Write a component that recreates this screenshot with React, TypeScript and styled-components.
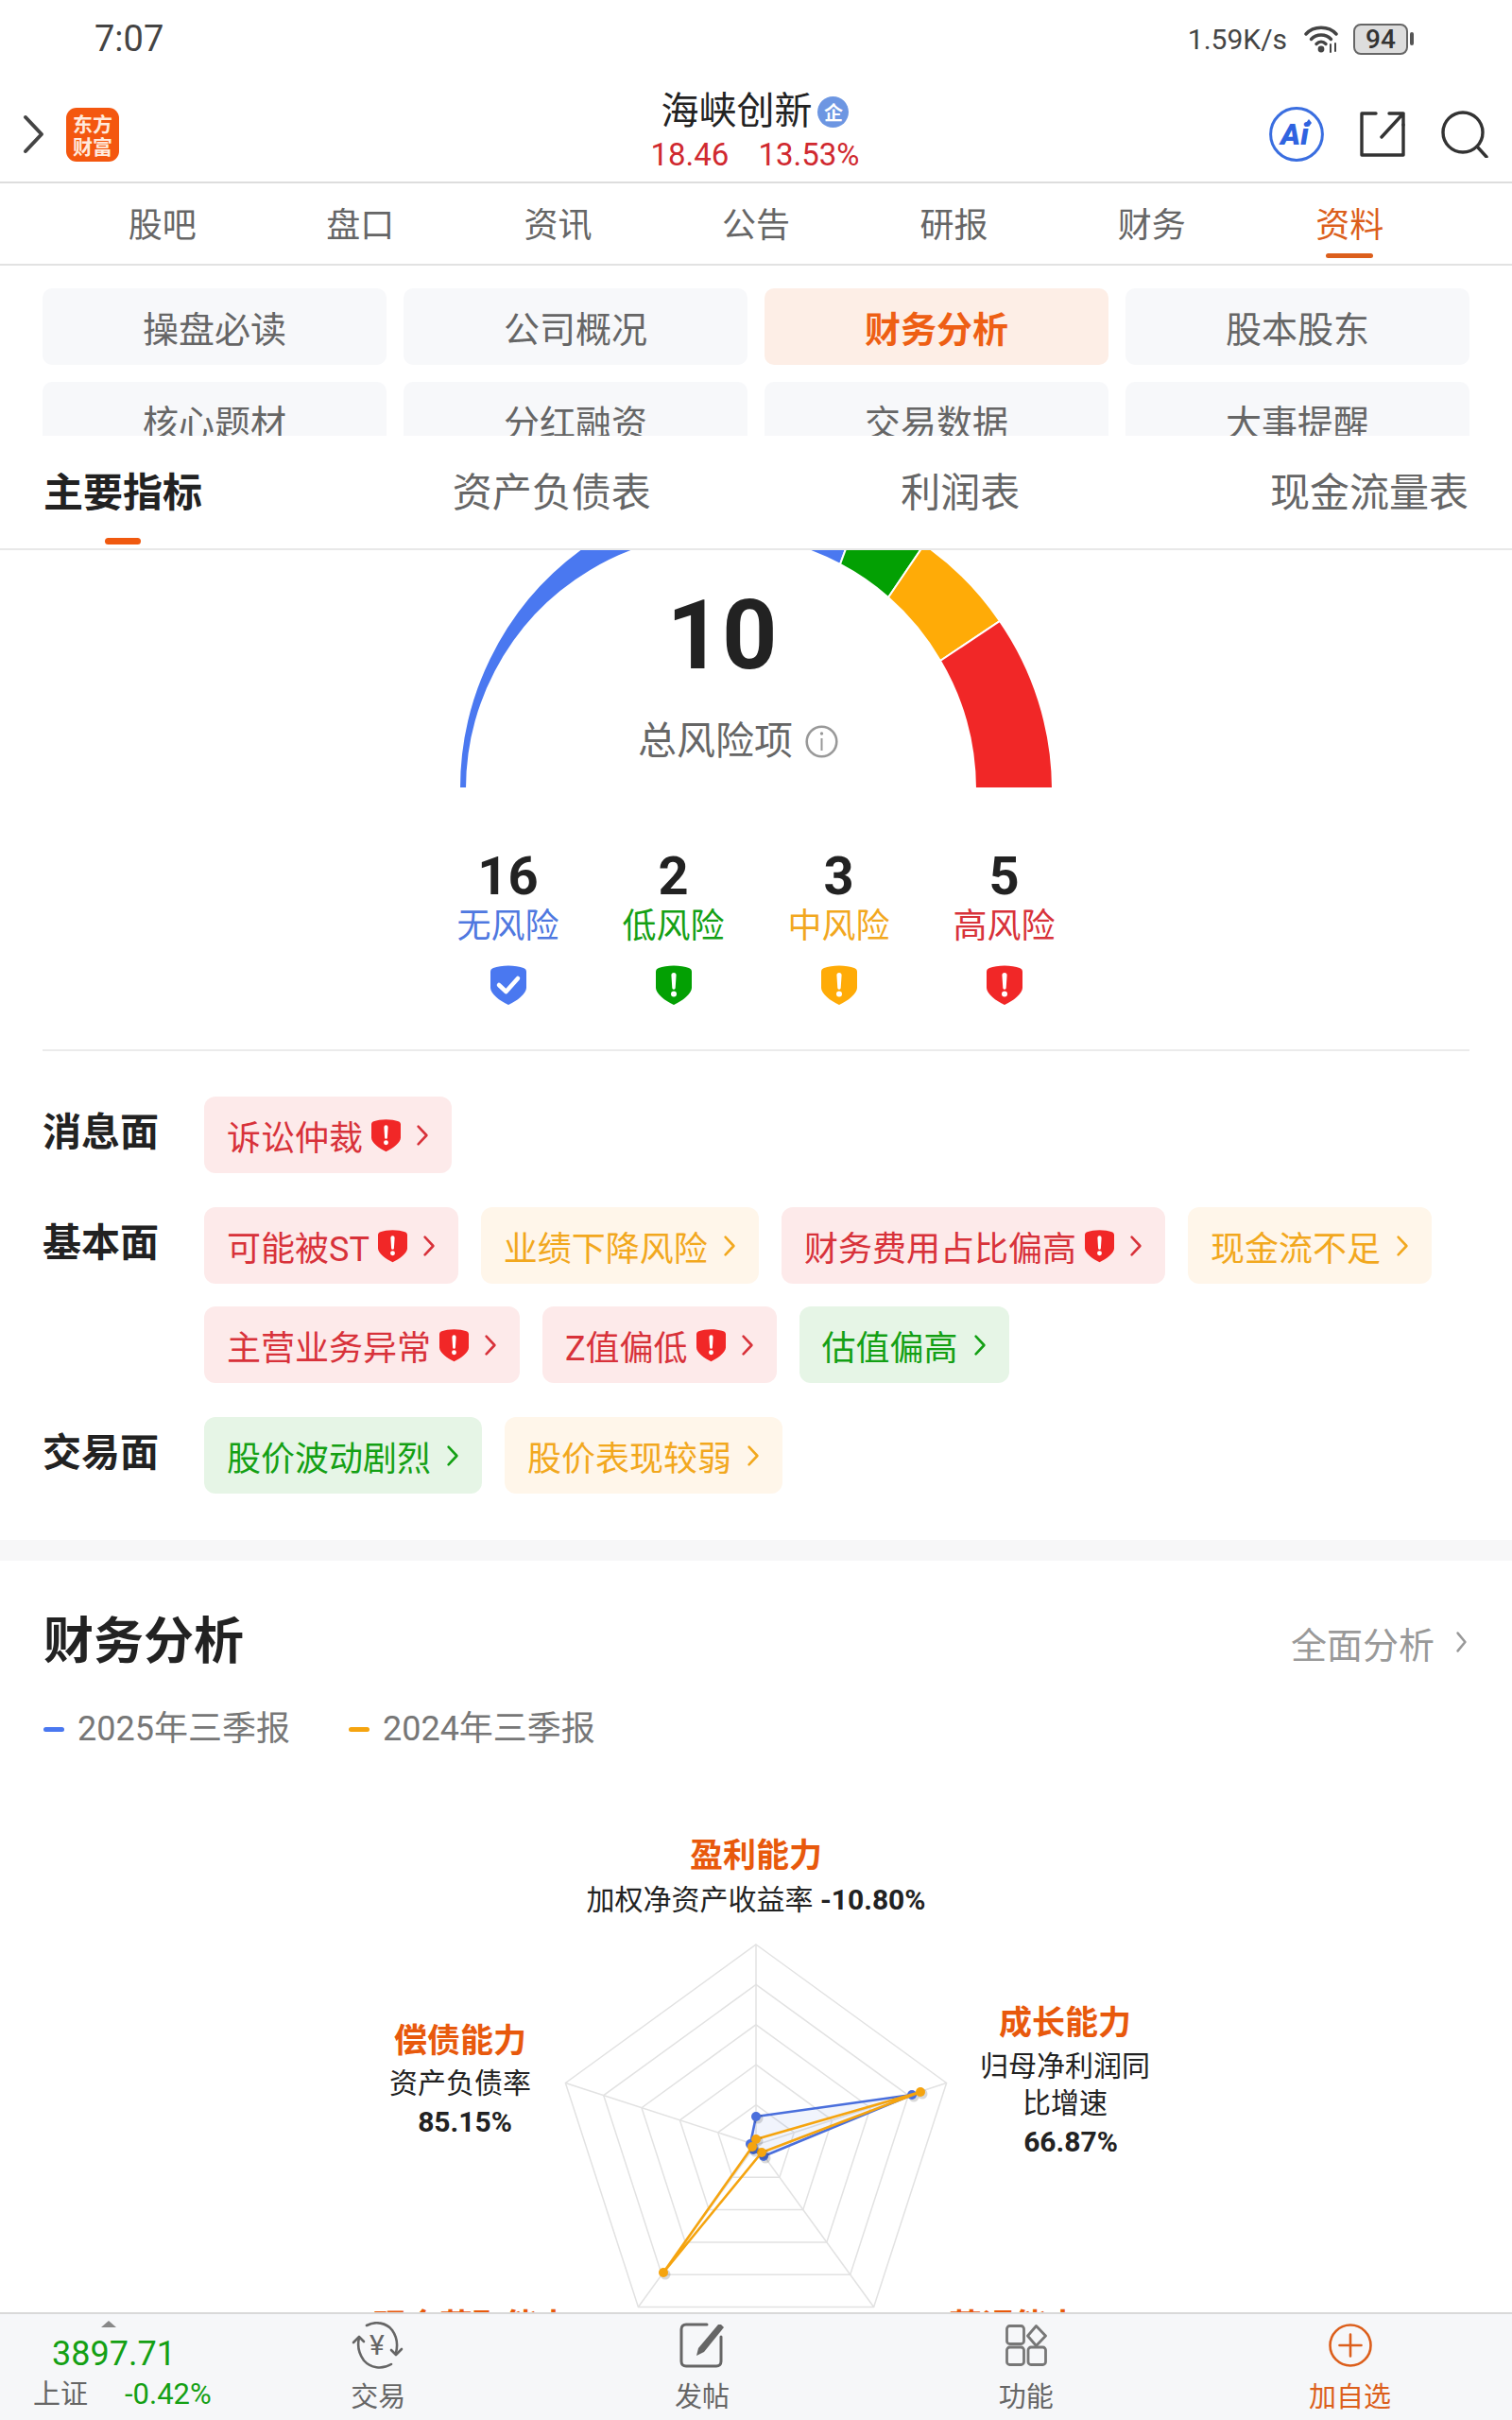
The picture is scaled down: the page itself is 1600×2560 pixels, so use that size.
import React from 'react';
import styled, { createGlobalStyle } from 'styled-components';

const GlobalStyle = createGlobalStyle`
  html, body {
    margin: 0;
    padding: 0;
    background: #ffffff;
  }
  * {
    box-sizing: border-box;
  }
  body {
    font-family: Roboto, "Noto Sans CJK SC", sans-serif;
    color: #222222;
  }
`;

const ORANGE = '#dc5f1c';

const tones = {
  red: { bg: '#fdeaea', fg: '#d8323a', solid: '#f12727' },
  orange: { bg: '#fff6ea', fg: '#f2a81e', solid: '#ffab07' },
  green: { bg: '#e6f5e6', fg: '#14a014', solid: '#03a003' },
  blue: { bg: '#eaf0fd', fg: '#4f78e0', solid: '#4a78f0' },
};

type Tone = keyof typeof tones;

const Screen = styled.div`
  width: 1600px;
  height: 2560px;
  display: flex;
  flex-direction: column;
  overflow: hidden;
  background: #ffffff;
`;

const StatusBar = styled.div`
  height: 82px;
  flex: none;
  display: flex;
  align-items: center;
  justify-content: space-between;
  padding: 0 104px 0 100px;
  color: #444444;
`;

const Clock = styled.span`
  font-size: 38px;
`;

const StatusRight = styled.div`
  display: flex;
  align-items: center;
`;

const Speed = styled.span`
  font-size: 30px;
  margin-right: 18px;
`;

const Battery = styled.span`
  width: 58px;
  height: 33px;
  margin-left: 14px;
  display: flex;
  align-items: center;
  justify-content: center;
  border: 2.5px solid #666666;
  border-radius: 8px;
  background: #dddddd;
  font-size: 28px;
  font-weight: 500;
  color: #333333;
`;

const BatteryNib = styled.span`
  width: 4px;
  height: 14px;
  margin-left: 2px;
  border-radius: 2px;
  background: #555555;
`;

const Header = styled.div`
  height: 112px;
  flex: none;
  display: grid;
  grid-template-columns: 1fr auto 1fr;
  align-items: center;
  padding: 0 25px 0 23px;
  border-bottom: 2px solid #dddddd;
`;

const HeaderLeft = styled.div`
  display: flex;
  align-items: center;
  gap: 22px;
  padding-top: 10px;
`;

const Logo = styled.div`
  width: 56px;
  height: 57px;
  display: flex;
  align-items: center;
  justify-content: center;
  text-align: center;
  border-radius: 11px;
  background: #f4570f;
  color: #ffeadd;
  font-size: 21px;
  line-height: 24px;
  font-weight: 700;
  font-family: "Noto Sans CJK SC", sans-serif;
`;

const TitleBlock = styled.div`
  display: flex;
  flex-direction: column;
  align-items: center;
`;

const TitleRow = styled.div`
  display: flex;
  align-items: center;
  gap: 6px;
  height: 54px;
  padding-top: 4px;
`;

const Title = styled.span`
  font-size: 40px;
  line-height: 50px;
  color: #222222;
`;

const VerifiedBadge = styled.span`
  width: 33px;
  height: 33px;
  display: flex;
  align-items: center;
  justify-content: center;
  border-radius: 50%;
  background: #6d96e2;
  color: #ffffff;
  font-size: 20px;
  font-weight: 700;
`;

const PriceRow = styled.div`
  display: flex;
  gap: 31px;
  font-size: 33px;
  line-height: 42px;
  color: #d0292f;
`;

const HeaderRight = styled.div`
  display: flex;
  align-items: center;
  justify-content: flex-end;
  gap: 38px;
  padding-top: 10px;
`;

const TopTabs = styled.div`
  height: 87px;
  flex: none;
  display: flex;
  padding: 0 67px;
  border-bottom: 2px solid #e2e2e2;
`;

const TopTab = styled.div<{ $active?: boolean }>`
  position: relative;
  flex: 1;
  display: flex;
  align-items: center;
  justify-content: center;
  padding-bottom: 3px;
  font-size: 36px;
  color: ${(p) => (p.$active ? ORANGE : '#666666')};

  ${(p) =>
    p.$active &&
    `&::after {
      content: '';
      position: absolute;
      left: 50%;
      bottom: 6px;
      width: 50px;
      height: 5px;
      margin-left: -25px;
      border-radius: 3px;
      background: ${ORANGE};
    }`}
`;

const SubNav = styled.div`
  height: 180px;
  flex: none;
  overflow: hidden;
  display: grid;
  grid-template-columns: repeat(4, 1fr);
  grid-auto-rows: 81px;
  gap: 18px;
  padding: 24px 45px 0;
`;

const SubNavButton = styled.div<{ $active?: boolean }>`
  display: flex;
  align-items: center;
  justify-content: center;
  border-radius: 10px;
  font-size: 38px;
  font-weight: ${(p) => (p.$active ? 700 : 400)};
  background: ${(p) => (p.$active ? '#fdeee6' : '#f7f8fa')};
  color: ${(p) => (p.$active ? '#ee5f14' : '#666666')};
`;

const MetricTabs = styled.div`
  height: 121px;
  flex: none;
  display: flex;
  justify-content: space-between;
  padding: 0 46px;
  border-bottom: 2px solid #e8e8e8;
`;

const MetricTab = styled.div<{ $active?: boolean }>`
  position: relative;
  display: flex;
  align-items: center;
  padding-bottom: 6px;
  font-size: 42px;
  font-weight: ${(p) => (p.$active ? 700 : 400)};
  color: ${(p) => (p.$active ? '#222222' : '#666666')};

  ${(p) =>
    p.$active &&
    `&::after {
      content: '';
      position: absolute;
      left: 50%;
      bottom: 4px;
      width: 38px;
      height: 7px;
      margin-left: -19px;
      border-radius: 4px;
      background: #f0590f;
    }`}
`;

const ScrollArea = styled.div`
  flex: 1;
  min-height: 0;
  overflow: hidden;
`;

const GaugePanel = styled.div`
  position: relative;
  height: 252px;
`;

const GaugeSvg = styled.svg`
  display: block;
`;

const GaugeCenter = styled.div`
  position: absolute;
  top: 0;
  left: 674px;
  width: 214px;
  display: flex;
  flex-direction: column;
  align-items: center;
`;

const GaugeValue = styled.div`
  margin: 34px 34px 0 0;
  font-size: 102px;
  line-height: 112px;
  font-weight: 700;
  color: #222222;
`;

const GaugeCaption = styled.div`
  margin-top: 28px;
  display: flex;
  align-items: center;
  gap: 13px;
  font-size: 41px;
  line-height: 56px;
  color: #666666;
`;

const StatGrid = styled.div`
  display: grid;
  grid-template-columns: repeat(4, 175px);
  justify-content: center;
  padding-top: 65px;
`;

const Stat = styled.div`
  display: flex;
  flex-direction: column;
  align-items: center;
`;

const StatNumber = styled.div`
  font-size: 56px;
  line-height: 56px;
  font-weight: 700;
  color: #222222;
`;

const StatLabel = styled.div<{ $tone: Tone }>`
  margin: 3px 0 19px;
  font-size: 36px;
  line-height: 44px;
  color: ${(p) => tones[p.$tone].fg};
`;

const Divider = styled.div`
  height: 2px;
  margin: 47px 45px 48px;
  background: #ebebeb;
`;

const RiskList = styled.div`
  display: flex;
  flex-direction: column;
  gap: 36px;
  padding: 0 45px 49px;
`;

const RiskRow = styled.div`
  display: grid;
  grid-template-columns: 171px 1fr;
`;

const RiskName = styled.div`
  padding-top: 14px;
  font-size: 41px;
  line-height: 48px;
  font-weight: 700;
  color: #222222;
`;

const ChipWrap = styled.div`
  display: flex;
  flex-wrap: wrap;
  gap: 24px;
`;

const Chip = styled.div<{ $tone: Tone }>`
  height: 81px;
  display: flex;
  align-items: center;
  padding: 0 24px;
  border-radius: 12px;
  font-size: 36px;
  white-space: nowrap;
  background: ${(p) => tones[p.$tone].bg};
  color: ${(p) => tones[p.$tone].fg};
`;

const ChipShield = styled.span`
  display: flex;
  margin-left: 9px;
`;

const ChipArrow = styled.span`
  display: flex;
  margin-left: 16px;
`;

const Band = styled.div`
  height: 22px;
  background: #f7f7f8;
`;

const FinanceHead = styled.div`
  display: flex;
  align-items: center;
  justify-content: space-between;
  padding: 56px 47px 0 46px;
`;

const FinanceTitle = styled.div`
  font-size: 53px;
  line-height: 60px;
  font-weight: 700;
  color: #222222;
`;

const MoreLink = styled.div`
  display: flex;
  align-items: center;
  gap: 22px;
  font-size: 38px;
  color: #999999;
`;

const Legend = styled.div`
  display: flex;
  gap: 62px;
  margin-top: 40px;
  padding: 0 46px;
`;

const LegendItem = styled.div`
  display: flex;
  align-items: center;
  gap: 14px;
  font-size: 36px;
  line-height: 44px;
  color: #777777;
`;

const LegendMark = styled.span<{ $color: string }>`
  width: 22px;
  height: 5px;
  border-radius: 3px;
  background: ${(p) => p.$color};
`;

const RadarCanvas = styled.div`
  position: relative;
  height: 640px;
`;

const RadarLabel = styled.div<{ $x: number; $y: number }>`
  position: absolute;
  left: ${(p) => p.$x}px;
  top: ${(p) => p.$y - 1848}px;
  transform: translate(-50%, -50%);
  text-align: center;
  white-space: nowrap;
  font-size: 30px;
  line-height: 40px;
  color: #222222;
`;

const RadarHeading = styled(RadarLabel)`
  font-size: 35px;
  font-weight: 700;
  color: #e8590c;
`;

const RadarValue = styled.span`
  font-weight: 700;
`;

const BottomBar = styled.div`
  height: 114px;
  flex: none;
  display: grid;
  grid-template-columns: 229px repeat(4, 1fr);
  background: #f6f7f9;
  border-top: 2px solid #d9d9d9;
`;

const IndexBlock = styled.div`
  position: relative;
  display: flex;
  flex-direction: column;
  padding-top: 22px;
  padding-left: 35px;

  &::before {
    content: '';
    position: absolute;
    left: 107px;
    top: 7px;
    border-left: 8px solid transparent;
    border-right: 8px solid transparent;
    border-bottom: 7px solid #888888;
  }
`;

const IndexValue = styled.div`
  margin-left: 20px;
  font-size: 36px;
  line-height: 40px;
  color: #14a014;
`;

const IndexRow = styled.div`
  display: flex;
  align-items: center;
  gap: 39px;
  margin-top: 4px;
  font-size: 29px;
  line-height: 38px;
  color: #666666;
`;

const IndexChange = styled.span`
  font-size: 31px;
  color: #14a014;
`;

const Action = styled.div<{ $active?: boolean }>`
  display: flex;
  flex-direction: column;
  align-items: center;
  padding-top: 8px;
  font-size: 29px;
  line-height: 36px;
  color: ${(p) => (p.$active ? ORANGE : '#666666')};
`;

const ActionIcon = styled.div`
  height: 50px;
  display: flex;
  align-items: center;
  margin-bottom: 12px;
`;

function Chevron({ color, w = 14, h = 24, sw = 2.6 }: { color: string; w?: number; h?: number; sw?: number }) {
  return (
    <svg width={w} height={h} viewBox={`0 0 ${w} ${h}`} fill="none">
      <path
        d={`M${sw} ${sw} L${w - sw} ${h / 2} L${sw} ${h - sw}`}
        stroke={color}
        strokeWidth={sw}
        strokeLinecap="round"
        strokeLinejoin="round"
      />
    </svg>
  );
}

function Shield({ color, w, h, check }: { color: string; w: number; h: number; check?: boolean }) {
  return (
    <svg width={w} height={h} viewBox="0 0 38 42">
      <path
        d="M19 .5C25 .5 31 1.5 35 3C37 3.7 38 5 38 7V24C38 30 28 38 19 42C10 38 0 30 0 24V7C0 5 1 3.7 3 3C7 1.5 13 .5 19 .5Z"
        fill={color}
      />
      {check ? (
        <path d="M9 21L16.5 28L29 14" fill="none" stroke="#fff" strokeWidth="4.5" strokeLinecap="round" strokeLinejoin="round" />
      ) : (
        <>
          <path d="M16.4 10.5a2.6 2.6 0 0 1 5.2 0L20.7 24a1.7 1.7 0 0 1-3.4 0Z" fill="#fff" />
          <circle cx="19" cy="30.5" r="3" fill="#fff" />
        </>
      )}
    </svg>
  );
}

function WifiIcon() {
  return (
    <svg width="38" height="30" viewBox="0 0 38 30" fill="none" stroke="#444" strokeLinecap="round">
      <path d="M2 10C10 1 26 1 34 10" strokeWidth="3.4" />
      <path d="M7.5 15.5C13 9.5 23 9.5 28.5 15.5" strokeWidth="3.4" />
      <path d="M13 20.5C16 17.5 20 17.5 23 20.5" strokeWidth="3.4" />
      <circle cx="18" cy="26" r="3.4" fill="#444" stroke="none" />
      <path d="M28 21V29M33 20V28" strokeWidth="2" />
    </svg>
  );
}

function AiIcon() {
  return (
    <svg width="58" height="58" viewBox="0 0 58 58">
      <circle cx="29" cy="29" r="27.4" fill="none" stroke="#3a6ee0" strokeWidth="3" />
      <text x="12" y="40" fontSize="32" fontWeight="900" fontStyle="italic" fontFamily="Roboto, sans-serif" fill="#2f63e0">
        Ai
      </text>
      <path d="M42 13L45 17L42 21L39 17Z" fill="#2f63e0" />
    </svg>
  );
}

function ShareIcon() {
  return (
    <svg width="48" height="48" viewBox="0 0 48 48" fill="none" stroke="#333" strokeWidth="3.4" strokeLinecap="round" strokeLinejoin="round">
      <path d="M17 2H2V46H46V14" />
      <path d="M31 2H46V14M46 2L23 27" />
    </svg>
  );
}

function SearchIcon() {
  return (
    <svg width="50" height="50" viewBox="0 0 50 50" fill="none" stroke="#333" strokeWidth="3.4" strokeLinecap="round">
      <circle cx="23" cy="23" r="21" />
      <path d="M38 38L48 49" />
    </svg>
  );
}

function InfoIcon() {
  return (
    <svg width="35" height="35" viewBox="0 0 35 35" fill="none" stroke="#999" strokeWidth="2.6">
      <circle cx="17.5" cy="17.5" r="15.8" />
      <path d="M17.5 14V27" strokeWidth="2" />
      <circle cx="17.5" cy="9" r="1.7" fill="#999" stroke="none" />
    </svg>
  );
}

function TradeIcon() {
  return (
    <svg width="56" height="50" viewBox="0 0 56 50" fill="none" stroke="#666" strokeWidth="2.6" strokeLinecap="round" strokeLinejoin="round">
      <path d="M16 4C25 -1 37 1 43 9C48 16 49 25 47 33" />
      <path d="M42 45C32 51 20 49 13 41C8 34 6 25 8 17" />
      <path d="M2 22L8 16L13 21" />
      <path d="M42 30L47 35L53 29" />
      <text x="27" y="35" textAnchor="middle" fontSize="30" fontFamily="Roboto, sans-serif" fill="#666" stroke="none">
        ¥
      </text>
    </svg>
  );
}

function PostIcon() {
  return (
    <svg width="48" height="48" viewBox="0 0 48 48" fill="none" stroke="#666" strokeWidth="3" strokeLinecap="round" strokeLinejoin="round">
      <path d="M29 2H7C4 2 2 4 2 7V41C2 44 4 46 7 46H39C42 46 44 44 44 41V15" />
      <path d="M44 2L47 5L26 31L18 35L20 27L41 2Z" fill="#666" stroke="none" />
    </svg>
  );
}

function GridIcon() {
  return (
    <svg width="44" height="44" viewBox="0 0 44 44" fill="none" stroke="#777" strokeWidth="2.8" strokeLinejoin="round">
      <rect x="1.5" y="1.5" width="18" height="19" rx="3" />
      <path d="M32.5 1.5L42.5 12L32.5 22.5L23.5 12Z" />
      <rect x="1.5" y="24" width="18" height="18.5" rx="3" />
      <rect x="24" y="24" width="18.5" height="18.5" rx="3" />
    </svg>
  );
}

function AddIcon() {
  return (
    <svg width="46" height="46" viewBox="0 0 46 46" fill="none" stroke={ORANGE} strokeWidth="2.6" strokeLinecap="round">
      <circle cx="23" cy="23" r="21.5" />
      <path d="M11.5 23H34.5M23 11.5V34.5" />
    </svg>
  );
}

function Gauge() {
  return (
    <GaugeSvg width="1600" height="252" viewBox="0 580 1600 252">
      <g stroke="#fff" strokeWidth="2">
        <path d="M486 832A314 314 0 0 1 910 538L889 595A269 269 0 0 0 494 832Z" fill={tones.blue.solid} />
        <path d="M910 538A314 314 0 0 1 978 574L940 630A269 269 0 0 0 889 595Z" fill={tones.green.solid} />
        <path d="M978 574A314 314 0 0 1 1058 655L995 697A269 269 0 0 0 940 630Z" fill={tones.orange.solid} />
        <path d="M1058 655A314 314 0 0 1 1114 832H1032A269 269 0 0 0 995 697Z" fill={tones.red.solid} />
      </g>
    </GaugeSvg>
  );
}

const RADAR_CX = 800;
const RADAR_CY = 2266;
const RADAR_R = 212;

function ringPoints(k: number) {
  return [0, 1, 2, 3, 4]
    .map((i) => {
      const a = (i * 72 * Math.PI) / 180;
      const x = RADAR_CX + Math.sin(a) * RADAR_R * k;
      const y = RADAR_CY - Math.cos(a) * RADAR_R * k;
      return `${x.toFixed(1)},${y.toFixed(1)}`;
    })
    .join(' ');
}

const blueSeries = [
  [800, 2236],
  [965, 2213],
  [808, 2278],
  [797, 2271],
  [794, 2265],
];

const orangeSeries = [
  [800, 2260],
  [974, 2210],
  [806, 2274],
  [702, 2401],
  [796, 2268],
];

function RadarSeries({ data, color, fill }: { data: number[][]; color: string; fill: string }) {
  return (
    <>
      <polygon points={data.map((p) => p.join(',')).join(' ')} fill={fill} stroke={color} strokeWidth="2.6" strokeLinejoin="round" />
      {data.map((p, i) => (
        <g key={i}>
          <circle cx={p[0] + 2} cy={p[1] + 2} r="5.5" fill="rgba(0,0,0,0.15)" />
          <circle cx={p[0]} cy={p[1]} r="5" fill={color} />
        </g>
      ))}
    </>
  );
}

function Radar() {
  return (
    <svg width="1600" height="640" viewBox="0 1848 1600 640">
      {[1, 0.8, 0.6, 0.4, 0.2].map((k) => (
        <polygon key={k} points={ringPoints(k)} fill="none" stroke="#e2e2e2" strokeWidth="1.5" />
      ))}
      {[0, 1, 2, 3, 4].map((i) => {
        const a = (i * 72 * Math.PI) / 180;
        return (
          <line
            key={i}
            x1={RADAR_CX}
            y1={RADAR_CY}
            x2={RADAR_CX + Math.sin(a) * RADAR_R}
            y2={RADAR_CY - Math.cos(a) * RADAR_R}
            stroke="#e2e2e2"
            strokeWidth="1.5"
          />
        );
      })}
      <RadarSeries data={blueSeries} color="#4a6fdc" fill="rgba(74,111,220,0.08)" />
      <RadarSeries data={orangeSeries} color="#f5a40f" fill="none" />
    </svg>
  );
}

const topTabs = ['股吧', '盘口', '资讯', '公告', '研报', '财务', '资料'];
const subNav = ['操盘必读', '公司概况', '财务分析', '股本股东', '核心题材', '分红融资', '交易数据', '大事提醒'];
const metricTabs = ['主要指标', '资产负债表', '利润表', '现金流量表'];

const stats: { n: number; label: string; tone: Tone }[] = [
  { n: 16, label: '无风险', tone: 'blue' },
  { n: 2, label: '低风险', tone: 'green' },
  { n: 3, label: '中风险', tone: 'orange' },
  { n: 5, label: '高风险', tone: 'red' },
];

const risks: { name: string; chips: { text: string; tone: Tone; warn?: boolean }[] }[] = [
  { name: '消息面', chips: [{ text: '诉讼仲裁', tone: 'red', warn: true }] },
  {
    name: '基本面',
    chips: [
      { text: '可能被ST', tone: 'red', warn: true },
      { text: '业绩下降风险', tone: 'orange' },
      { text: '财务费用占比偏高', tone: 'red', warn: true },
      { text: '现金流不足', tone: 'orange' },
      { text: '主营业务异常', tone: 'red', warn: true },
      { text: 'Z值偏低', tone: 'red', warn: true },
      { text: '估值偏高', tone: 'green' },
    ],
  },
  {
    name: '交易面',
    chips: [
      { text: '股价波动剧烈', tone: 'green' },
      { text: '股价表现较弱', tone: 'orange' },
    ],
  },
];

export default function App() {
  return (
    <Screen>
      <GlobalStyle />
      <StatusBar>
        <Clock>7:07</Clock>
        <StatusRight>
          <Speed>1.59K/s</Speed>
          <WifiIcon />
          <Battery>94</Battery>
          <BatteryNib />
        </StatusRight>
      </StatusBar>

      <Header>
        <HeaderLeft>
          <Chevron color="#444" w={25} h={44} sw={4} />
          <Logo>
            东方
            <br />
            财富
          </Logo>
        </HeaderLeft>
        <TitleBlock>
          <TitleRow>
            <Title>海峡创新</Title>
            <VerifiedBadge>企</VerifiedBadge>
          </TitleRow>
          <PriceRow>
            <span>18.46</span>
            <span>13.53%</span>
          </PriceRow>
        </TitleBlock>
        <HeaderRight>
          <AiIcon />
          <ShareIcon />
          <SearchIcon />
        </HeaderRight>
      </Header>

      <TopTabs>
        {topTabs.map((t) => (
          <TopTab key={t} $active={t === '资料'}>
            {t}
          </TopTab>
        ))}
      </TopTabs>

      <SubNav>
        {subNav.map((t) => (
          <SubNavButton key={t} $active={t === '财务分析'}>
            {t}
          </SubNavButton>
        ))}
      </SubNav>

      <MetricTabs>
        {metricTabs.map((t, i) => (
          <MetricTab key={t} $active={i === 0}>
            {t}
          </MetricTab>
        ))}
      </MetricTabs>

      <ScrollArea>
        <GaugePanel>
          <Gauge />
          <GaugeCenter>
            <GaugeValue>10</GaugeValue>
            <GaugeCaption>
              总风险项
              <InfoIcon />
            </GaugeCaption>
          </GaugeCenter>
        </GaugePanel>

        <StatGrid>
          {stats.map((s) => (
            <Stat key={s.label}>
              <StatNumber>{s.n}</StatNumber>
              <StatLabel $tone={s.tone}>{s.label}</StatLabel>
              <Shield color={tones[s.tone].solid} w={38} h={42} check={s.tone === 'blue'} />
            </Stat>
          ))}
        </StatGrid>

        <Divider />

        <RiskList>
          {risks.map((r) => (
            <RiskRow key={r.name}>
              <RiskName>{r.name}</RiskName>
              <ChipWrap>
                {r.chips.map((c) => (
                  <Chip key={c.text} $tone={c.tone}>
                    {c.text}
                    {c.warn && (
                      <ChipShield>
                        <Shield color={tones.red.solid} w={31} h={36} />
                      </ChipShield>
                    )}
                    <ChipArrow>
                      <Chevron color={tones[c.tone].fg} />
                    </ChipArrow>
                  </Chip>
                ))}
              </ChipWrap>
            </RiskRow>
          ))}
        </RiskList>

        <Band />

        <FinanceHead>
          <FinanceTitle>财务分析</FinanceTitle>
          <MoreLink>
            全面分析
            <Chevron color="#999" w={13} h={24} />
          </MoreLink>
        </FinanceHead>

        <Legend>
          <LegendItem>
            <LegendMark $color="#4a78f0" />
            2025年三季报
          </LegendItem>
          <LegendItem>
            <LegendMark $color="#f5a40f" />
            2024年三季报
          </LegendItem>
        </Legend>

        <RadarCanvas>
          <Radar />
          <RadarHeading $x={800} $y={1961}>盈利能力</RadarHeading>
          <RadarLabel $x={800} $y={2007}>
            加权净资产收益率 <RadarValue>-10.80%</RadarValue>
          </RadarLabel>
          <RadarHeading $x={1127} $y={2138}>成长能力</RadarHeading>
          <RadarLabel $x={1127} $y={2183}>归母净利润同</RadarLabel>
          <RadarLabel $x={1127} $y={2222}>比增速</RadarLabel>
          <RadarLabel $x={1133} $y={2263}><RadarValue>66.87%</RadarValue></RadarLabel>
          <RadarHeading $x={487} $y={2157}>偿债能力</RadarHeading>
          <RadarLabel $x={487} $y={2201}>资产负债率</RadarLabel>
          <RadarLabel $x={492} $y={2242}><RadarValue>85.15%</RadarValue></RadarLabel>
          <RadarHeading $x={500} $y={2459}>现金获取能力</RadarHeading>
          <RadarHeading $x={1074} $y={2459}>营运能力</RadarHeading>
        </RadarCanvas>
      </ScrollArea>

      <BottomBar>
        <IndexBlock>
          <IndexValue>3897.71</IndexValue>
          <IndexRow>
            上证
            <IndexChange>-0.42%</IndexChange>
          </IndexRow>
        </IndexBlock>
        <Action>
          <ActionIcon>
            <TradeIcon />
          </ActionIcon>
          交易
        </Action>
        <Action>
          <ActionIcon>
            <PostIcon />
          </ActionIcon>
          发帖
        </Action>
        <Action>
          <ActionIcon>
            <GridIcon />
          </ActionIcon>
          功能
        </Action>
        <Action $active>
          <ActionIcon>
            <AddIcon />
          </ActionIcon>
          加自选
        </Action>
      </BottomBar>
    </Screen>
  );
}
